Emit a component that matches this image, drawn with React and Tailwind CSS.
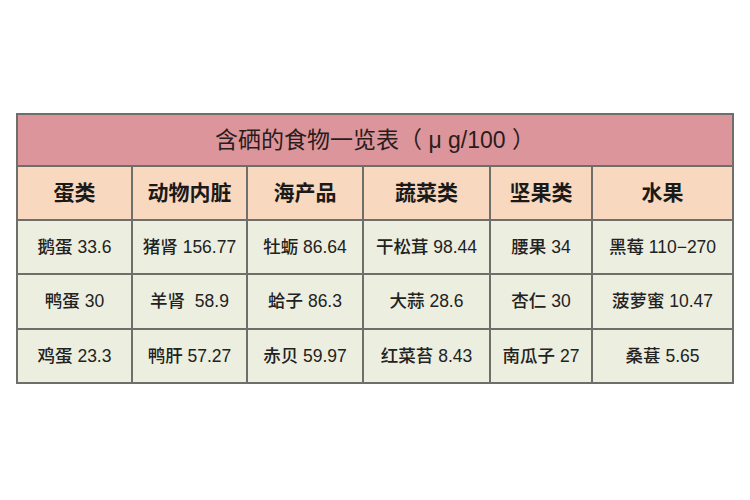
import React from 'react';

const headers = ['蛋类', '动物内脏', '海产品', '蔬菜类', '坚果类', '水果'];

const rows = [
  ['鹅蛋 33.6', '猪肾 156.77', '牡蛎 86.64', '干松茸 98.44', '腰果 34', '黑莓 110−270'],
  ['鸭蛋 30', '羊肾  58.9', '蛤子 86.3', '大蒜 28.6', '杏仁 30', '菠萝蜜 10.47'],
  ['鸡蛋 23.3', '鸭肝 57.27', '赤贝 59.97', '红菜苔 8.43', '南瓜子 27', '桑葚 5.65'],
];

const font = { fontFamily: '"Liberation Sans", "Noto Sans CJK SC", sans-serif' };

export default function App() {
  return (
    <div className="w-[750px] h-[500px] bg-white pt-[113px] pl-[16px]" style={font}>
      <div className="grid w-[718px] grid-cols-[113px_113px_114px_125px_100px_139px] grid-rows-[50px_52px_52px_53px_52px] gap-[2px] bg-[#6e6e6a] p-[2px]">
        <div className="col-span-6 flex items-center justify-center bg-[#dc959a] text-[23px] text-[#2b1c1c]">
          含硒的食物一览表（ μ g/100 ）
        </div>
        {headers.map((h) => (
          <div key={h} className="flex items-center justify-center bg-[#f8d8bf] text-[21px] font-bold text-[#1c1a18]">
            {h}
          </div>
        ))}
        {rows.map((row, i) =>
          row.map((cell, j) => (
            <div
              key={`${i}-${j}`}
              className="flex items-center justify-center whitespace-pre bg-[#eceee0] text-[17.5px] font-medium text-[#222220]"
            >
              {cell}
            </div>
          ))
        )}
      </div>
    </div>
  );
}
